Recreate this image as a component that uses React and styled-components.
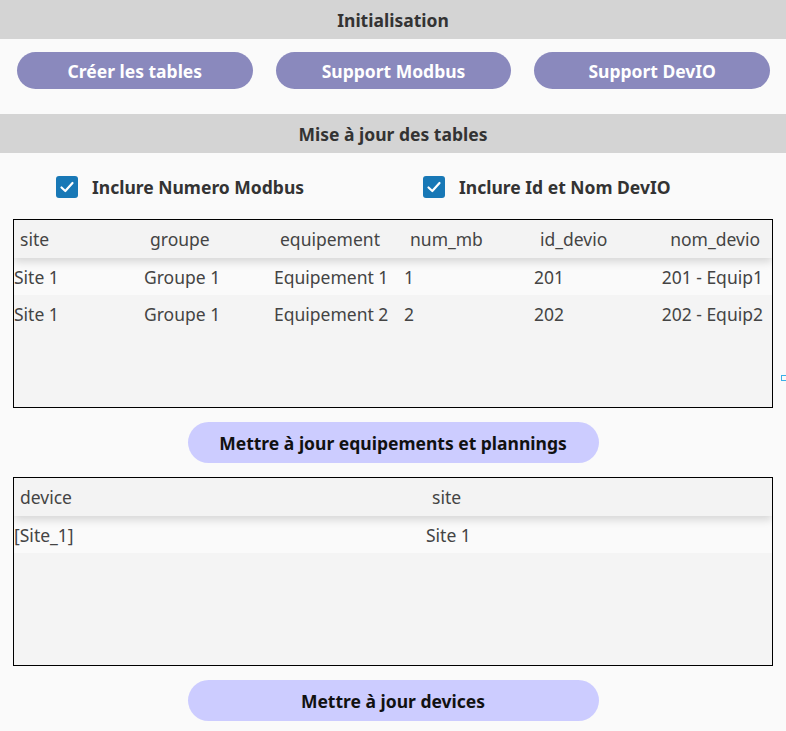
import React from "react";
import styled, { createGlobalStyle } from "styled-components";

const GlobalStyle = createGlobalStyle`
  body {
    margin: 0;
    background: #fafafa;
    font-family: "Noto Sans", "Open Sans", sans-serif;
    color: #333;
  }
`;

const Page = styled.div`
  position: relative;
  width: 786px;
  display: flex;
  flex-direction: column;
`;

const SectionTitle = styled.div`
  height: 39px;
  background: #d4d4d4;
  display: flex;
  align-items: center;
  justify-content: center;
  font-size: 17.5px;
  font-weight: 700;
  color: #333;
`;

const ButtonRow = styled.div`
  display: flex;
  gap: 23px;
  padding: 13px 16px 25px 17px;
`;

const InitButton = styled.button`
  width: 236px;
  height: 37px;
  border: none;
  border-radius: 19px;
  background: #8a89bd;
  color: #fff;
  font-family: inherit;
  font-size: 17.5px;
  font-weight: 700;
  cursor: pointer;
`;

const Section = styled.div`
  display: flex;
  flex-direction: column;
  align-items: center;
  padding: 0 13px;
`;

const OptionRow = styled.div`
  align-self: stretch;
  height: 66px;
  display: grid;
  grid-template-columns: 367px 1fr;
  align-items: center;
  padding-left: 43px;
`;

const Option = styled.label`
  display: flex;
  align-items: center;
  gap: 14px;
  font-size: 17.5px;
  font-weight: 700;
  color: #333;
  padding-top: 2px;
`;

const Box = styled.span`
  width: 22px;
  height: 22px;
  border-radius: 3px;
  background: #1878b6;
  display: flex;
  align-items: center;
  justify-content: center;
`;

const Table = styled.div`
  align-self: stretch;
  height: 189px;
  box-sizing: border-box;
  border: 1px solid #000;
  background: #f4f4f4;
  overflow: hidden;
`;

const HeadRow = styled.div`
  display: grid;
  grid-template-columns: ${(p) => p.$cols};
  height: 38px;
  align-items: center;
  background: #f3f3f3;
  box-shadow: 0 4px 8px rgba(0, 0, 0, 0.14);
  position: relative;
`;

const Row = styled.div`
  display: grid;
  grid-template-columns: ${(p) => p.$cols};
  height: 37px;
  align-items: center;
  background: ${(p) => (p.$odd ? "#f4f4f4" : "#fafafa")};
`;

const HeadCell = styled.div`
  font-size: 17.5px;
  color: #444;
  white-space: nowrap;
  padding-left: 6px;
  text-align: ${(p) => (p.$right ? "right" : "left")};
  padding-right: ${(p) => (p.$right ? "12px" : "0")};
`;

const Cell = styled.div`
  font-size: 17.5px;
  color: #444;
  white-space: nowrap;
  text-align: ${(p) => (p.$right ? "right" : "left")};
  padding-right: ${(p) => (p.$right ? "9px" : "0")};
`;

const UpdateButton = styled.button`
  width: 411px;
  height: 41px;
  margin: 14px 0;
  border: none;
  border-radius: 21px;
  background: #ccccff;
  color: #111;
  font-family: inherit;
  font-size: 17.5px;
  font-weight: 700;
  cursor: pointer;
`;

const FocusMark = styled.span`
  position: absolute;
  left: 781px;
  top: 375px;
  width: 6px;
  height: 6px;
  box-sizing: border-box;
  border: 1px solid #3bb0e8;
`;

const Check = () => (
  <Box>
    <svg width="16" height="16" viewBox="0 0 16 16">
      <path d="M2.5 8.5 L6.3 12 L13.5 4" fill="none" stroke="#fff" strokeWidth="2.2" strokeLinecap="round" strokeLinejoin="round" />
    </svg>
  </Box>
);

const equipCols = "130px 130px 130px 130px 110px 1fr";
const equipHeads = ["site", "groupe", "equipement", "num_mb", "id_devio", "nom_devio"];
const equipRows = [
  ["Site 1", "Groupe 1", "Equipement 1", "1", "201", "201 - Equip1"],
  ["Site 1", "Groupe 1", "Equipement 2", "2", "202", "202 - Equip2"],
];

const deviceCols = "412px 1fr";
const deviceHeads = ["device", "site"];
const deviceRows = [["[Site_1]", "Site 1"]];

const DataTable = ({ cols, heads, rows, rightLast }) => (
  <Table>
    <HeadRow $cols={cols}>
      {heads.map((h, i) => (
        <HeadCell key={h} $right={rightLast && i === heads.length - 1}>
          {h}
        </HeadCell>
      ))}
    </HeadRow>
    {rows.map((r, ri) => (
      <Row key={ri} $cols={cols} $odd={ri % 2 === 1}>
        {r.map((c, i) => (
          <Cell key={i} $right={rightLast && i === r.length - 1}>
            {c}
          </Cell>
        ))}
      </Row>
    ))}
  </Table>
);

export default function App() {
  return (
    <Page>
      <GlobalStyle />
      <SectionTitle>Initialisation</SectionTitle>
      <ButtonRow>
        <InitButton>Créer les tables</InitButton>
        <InitButton>Support Modbus</InitButton>
        <InitButton>Support DevIO</InitButton>
      </ButtonRow>
      <SectionTitle>Mise à jour des tables</SectionTitle>
      <Section>
        <OptionRow>
          <Option>
            <Check />
            Inclure Numero Modbus
          </Option>
          <Option>
            <Check />
            Inclure Id et Nom DevIO
          </Option>
        </OptionRow>
        <DataTable cols={equipCols} heads={equipHeads} rows={equipRows} rightLast />
        <UpdateButton>Mettre à jour equipements et plannings</UpdateButton>
        <DataTable cols={deviceCols} heads={deviceHeads} rows={deviceRows} />
        <UpdateButton>Mettre à jour devices</UpdateButton>
      </Section>
      <FocusMark />
    </Page>
  );
}
